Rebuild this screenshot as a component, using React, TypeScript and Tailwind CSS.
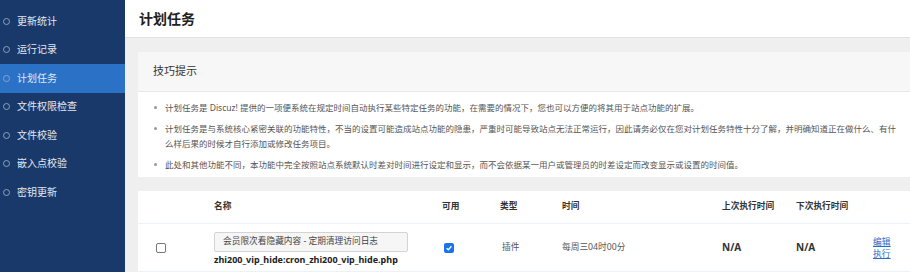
const menu = ["更新统计", "运行记录", "计划任务", "文件权限检查", "文件校验", "嵌入点校验", "密钥更新"];

const tips = [
  "计划任务是 Discuz! 提供的一项便系统在规定时间自动执行某些特定任务的功能，在需要的情况下，您也可以方便的将其用于站点功能的扩展。",
  "计划任务是与系统核心紧密关联的功能特性，不当的设置可能造成站点功能的隐患，严重时可能导致站点无法正常运行，因此请务必仅在您对计划任务特性十分了解，并明确知道正在做什么、有什么样后果的时候才自行添加或修改任务项目。",
  "此处和其他功能不同，本功能中完全按照站点系统默认时差对时间进行设定和显示，而不会依据某一用户或管理员的时差设定而改变显示或设置的时间值。",
];

const font = { fontFamily: '"Noto Sans", "Noto Sans CJK SC", sans-serif' };

export default function App() {
  return (
    <div className="flex h-[272px] w-[910px] overflow-hidden bg-[#efefef]" style={font}>
      <aside className="w-[125px] shrink-0 bg-[#18396a] pt-[7px]">
        {menu.map((m) => (
          <div
            key={m}
            className={`flex h-[28.5px] items-center gap-[7px] pl-[3px] text-[10px] text-[#e3e9f1] ${
              m === "计划任务" ? "bg-[#2b72c6]" : ""
            }`}
          >
            <span className="h-[7px] w-[7px] rounded-full border border-[#8ea2bd]" />
            {m}
          </div>
        ))}
      </aside>

      <main className="flex-1 overflow-hidden">
        <div className="flex h-[38px] items-center border-b border-[#e2e2e2] bg-white pl-[14px]">
          <h1 className="text-[14px] font-bold text-[#222]">计划任务</h1>
        </div>

        <div className="pl-[13px]">
          <section className="mt-[14px] w-[800px] bg-white">
            <div className="flex h-[40px] items-center border-b border-[#e8e8e8] bg-[#f7f7f7] pl-[15px] text-[11px] text-[#333]">
              技巧提示
            </div>
            <ul className="pb-[5px] pl-[16px] pt-[8px] text-[8.5px] leading-[15px] text-[#555]">
              {tips.map((t, i) => (
                <li key={i} className={`flex gap-[8px] ${i > 0 ? "mt-[6px]" : ""}`}>
                  <span className="mt-[6px] h-[3px] w-[3px] shrink-0 rounded-full bg-[#999]" />
                  <span className="w-[733px]">{t}</span>
                </li>
              ))}
            </ul>
          </section>

          <section className="mt-[14px] w-[800px] bg-white text-[8.7px] text-[#333]">
            <div className="grid h-[33px] grid-cols-[76px_228px_58px_62px_160px_74px_77px_1fr] items-center border-b border-[#edf2f7] font-semibold">
              <span />
              <span>名称</span>
              <span>可用</span>
              <span>类型</span>
              <span>时间</span>
              <span>上次执行时间</span>
              <span>下次执行时间</span>
              <span />
            </div>
            <div className="grid h-[48px] grid-cols-[76px_228px_58px_62px_160px_74px_77px_1fr] items-center border-b border-[#edf2f7]">
              <span className="pl-[18px] pt-[1px]">
                <span className="block h-[10px] w-[10px] rounded-[2px] border border-[#777] bg-white" />
              </span>
              <div className="flex flex-col pt-[2px]">
                <div className="flex h-[20px] w-[194px] items-center rounded-[2px] border border-[#d3d3d3] bg-[#f6f6f6] pl-[8px] text-[#444]">
                  会员限次看隐藏内容 - 定期清理访问日志
                </div>
                <div className="mt-[2px] text-[9px] font-bold leading-[12px] text-[#222]">
                  zhi200_vip_hide:cron_zhi200_vip_hide.php
                </div>
              </div>
              <span className="pl-[2px] pt-[1px]">
                <span className="flex h-[10px] w-[10px] items-center justify-center rounded-[2px] bg-[#1a73e8]">
                  <svg viewBox="0 0 10 10" className="h-[8px] w-[8px]">
                    <path d="M2 5.2 L4.2 7.2 L8 2.8" fill="none" stroke="white" strokeWidth="1.6" />
                  </svg>
                </span>
              </span>
              <span className="pl-[2px] text-[#555]">插件</span>
              <span className="text-[#555]">每周三04时00分</span>
              <span className="text-[10px] font-bold">N/A</span>
              <span className="text-[10px] font-bold">N/A</span>
              <span className="flex flex-col pt-[1px] leading-[12px] text-[#2b6cc4] underline">
                <a>编辑</a>
                <a>执行</a>
              </span>
            </div>
          </section>
        </div>
      </main>
    </div>
  );
}
